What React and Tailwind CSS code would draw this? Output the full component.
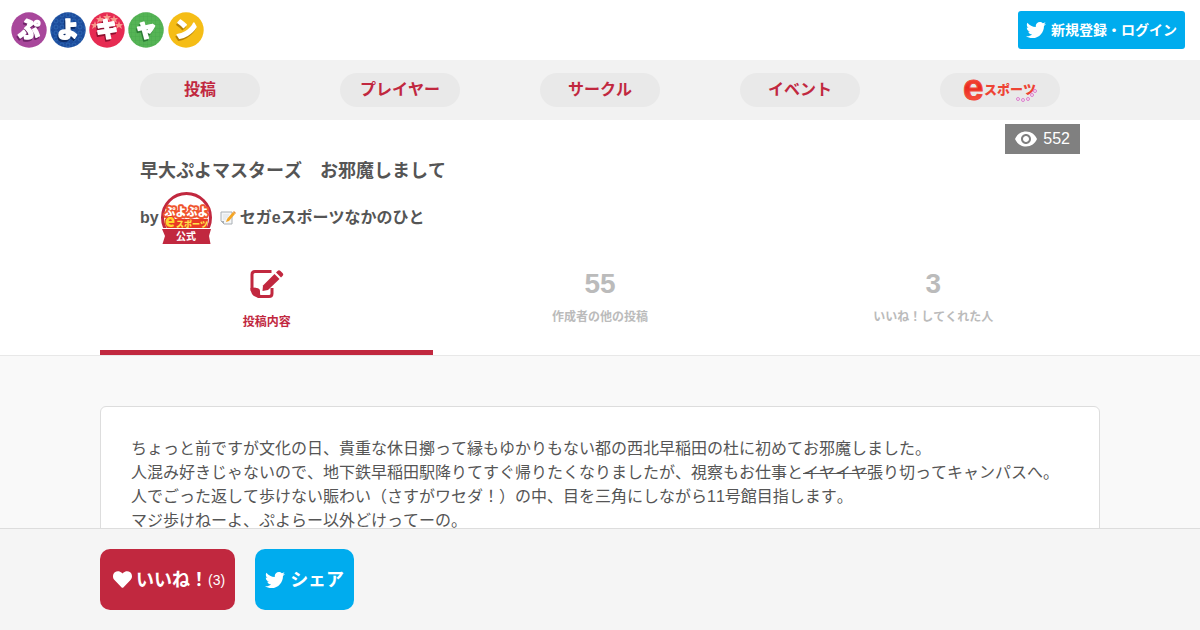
import React from "react";
import { FaTwitter, FaHeart } from "react-icons/fa";
import { MdVisibility } from "react-icons/md";

const navLinks = [
  { name: "投稿", path: "#posts" },
  { name: "プレイヤー", path: "#players" },
  { name: "サークル", path: "#circles" },
  { name: "イベント", path: "#events" },
];

const logoLetters = [
  { char: "ぷ", x: 18, shadow: "#6f2468" },
  { char: "よ", x: 57, shadow: "#0d2c66" },
  { char: "キ", x: 96, shadow: "#8f1030" },
  { char: "ャ", x: 135, shadow: "#2c7a35" },
  { char: "ン", x: 175, shadow: "#b58205" },
];

const Logo = () => (
  <svg viewBox="0 0 194 36" className="h-9 w-[194px] overflow-visible" role="img" aria-label="ぷよキャン">
    <defs>
      <pattern id="grid" width="4" height="4" patternUnits="userSpaceOnUse">
        <path d="M0 0H4M0 0V4" stroke="#3d9a44" strokeWidth="0.8" />
      </pattern>
      <pattern id="bubbles" width="6" height="6" patternUnits="userSpaceOnUse">
        <circle cx="3" cy="3" r="2" fill="none" stroke="#3a7cc4" strokeWidth="0.8" />
      </pattern>
    </defs>
    <circle cx="18" cy="18" r="17.700" fill="#a8479b" />
    <circle cx="57" cy="18" r="17.700" fill="#1c4c9c" />
    <circle cx="57" cy="18" r="17.700" fill="url(#bubbles)" opacity="0.6" />
    <circle cx="96" cy="18" r="17.700" fill="#e62b52" />
    <circle cx="135" cy="18" r="17.700" fill="#55b455" />
    <circle cx="135" cy="18" r="17.700" fill="url(#grid)" opacity="0.5" />
    <circle cx="175" cy="18" r="17.700" fill="#f5bd16" />
    <g fill="#f79a8c">
      <path id="star" d="M96 1l1 3h3l-2 2 1 3-3-2-3 2 1-3-2-2h3z" />
      <use href="#star" x="-7" y="2" />
      <use href="#star" x="7" y="2" />
      <use href="#star" x="-12" y="8" />
      <use href="#star" x="12" y="8" />
    </g>
    <g
      fill="#fff"
      fontSize="22"
      fontWeight="900"
      textAnchor="middle"
      strokeLinejoin="round"
      className="font-['Noto_Sans_CJK_JP',sans-serif]"
    >
      {logoLetters.map(({ char, x, shadow }) => (
        <text
          key={char}
          x={x}
          y={char === "ャ" ? 24 : 25}
          stroke="#fff"
          strokeWidth="1.5"
          style={{ filter: `drop-shadow(-1px 2px 0 ${shadow})` }}
        >
          {char}
        </text>
      ))}
    </g>
  </svg>
);

const EsportsLogo = () => (
  <svg viewBox="0 0 76 26" className="h-[26px] w-[76px] overflow-visible" role="img" aria-label="eスポーツ">
    <defs>
      <linearGradient id="flame" x1="0" y1="0" x2="0" y2="1">
        <stop offset="0" stopColor="#ff6d58" />
        <stop offset="0.5" stopColor="#ea2a20" />
        <stop offset="1" stopColor="#ff6a50" />
      </linearGradient>
    </defs>
    <text x="1" y="23" fill="url(#flame)" stroke="#f04a3a" strokeWidth="1" fontSize="37" fontWeight="700" className="font-['Liberation_Sans',sans-serif]">
      e
    </text>
    <text x="22" y="17" fill="#ee4434" fontSize="13" fontWeight="900" className="font-['Noto_Sans_CJK_JP',sans-serif]">
      スポーツ
    </text>
    <g fill="#f6e4f4" stroke="#d568c4" strokeWidth="0.8">
      <circle cx="56" cy="22" r="1.5" />
      <circle cx="61" cy="23" r="1.5" />
      <circle cx="66" cy="22" r="1.5" />
      <circle cx="70" cy="18" r="1.5" />
      <circle cx="73" cy="14" r="1.5" />
    </g>
  </svg>
);

const Avatar = () => (
  <svg viewBox="0 0 52 52" className="h-[52px] w-[52px] overflow-visible" role="img" aria-label="公式">
    <circle cx="25.500" cy="25.500" r="24" fill="#fff" stroke="#c1283f" strokeWidth="3" />
    <path d="M4 27H47L46 37H6z" fill="#e83a25" />
    <g fontWeight="900" textAnchor="middle" paintOrder="stroke" strokeLinejoin="round" className="font-['Noto_Sans_CJK_JP',sans-serif]">
      <text x="25.500" y="24" fontSize="11" fill="#fff" stroke="#f0542d" strokeWidth="4">
        ぷよぷよ
      </text>
      <text x="31" y="35" fontSize="8" fill="#ffe14a">
        スポーツ
      </text>
      <text x="9" y="35" fontSize="17" fill="#ffd22e" stroke="#e83a25" strokeWidth="2">
        e
      </text>
    </g>
    <path d="M1 37H50L48 44L49.500 52H1.500L4 44z" fill="#c1283f" />
    <path d="M1 36.500H50" stroke="#fff" />
    <text x="25" y="48" fontSize="10" fontWeight="700" fill="#fff" textAnchor="middle" className="font-['Noto_Sans_CJK_JP',sans-serif]">
      公式
    </text>
  </svg>
);

const MemoIcon = () => (
  <svg viewBox="0 0 16 16" className="h-4 w-4" aria-hidden="true">
    <path d="M1 2H12V14H4L1 11z" fill="#f4f6f8" stroke="#aab0b5" />
    <path d="M3 5H9M3 7H8M3 9H6" stroke="#dde1e4" />
    <path d="M1 11H4V14z" fill="#aab0b5" />
    <path d="M6 12L7 9L13 2L15 4L9 11z" fill="#f5a623" />
    <path d="M13 2L14 1L16 3L15 4z" fill="#e8943b" />
  </svg>
);

const EditIcon = () => (
  <svg viewBox="0 0 34 28" className="h-7 w-[34px]" aria-hidden="true">
    <path d="M21.500 1.500H5Q2 1.500 2 4.500V19Q9 18 9 26.500H19Q22 26.500 22 23.500V18" fill="none" stroke="currentColor" strokeWidth="3" />
    <path d="M.5 18Q10 17 10 21V28Q.5 27 .5 18z" fill="currentColor" />
    <path d="M12.500 21L13 15.500L24.500 4L29.500 9L18 20z" fill="currentColor" />
    <path d="M26 2.500L27.500 1Q29 -.5 30.500 1L32.500 3Q34 4.500 32.500 6L31 7.500z" fill="currentColor" />
  </svg>
);

const Navbar = () => (
  <header>
    <div className="flex h-15 items-center justify-between bg-white pl-[11px] pr-[15px]">
      <a href="#top">
        <Logo />
      </a>
      <button className="flex h-[38px] items-center gap-[5px] rounded-[3px] bg-[#00acee] px-2 text-sm font-bold text-white">
        <FaTwitter className="h-5 w-5" />
        新規登録・ログイン
      </button>
    </div>
    <nav className="bg-[#f2f2f2]">
      <ul className="mx-auto grid h-15 max-w-[1000px] grid-cols-5 items-center">
        {navLinks.map(({ name, path }) => (
          <li key={path} className="flex justify-center">
            <a href={path} className="flex h-[34px] w-30 items-center justify-center rounded-full bg-[#e9e9e9] font-bold text-[#c1283f]">
              {name}
            </a>
          </li>
        ))}
        <li className="flex justify-center">
          <a href="#esports" className="flex h-[34px] w-30 items-center justify-center rounded-full bg-[#e9e9e9]">
            <EsportsLogo />
          </a>
        </li>
      </ul>
    </nav>
  </header>
);

const PostHeader = () => (
  <section className="border-b border-[#e8e8e8] bg-white">
    <div className="relative mx-auto max-w-[1000px]">
      {/* View count */}
      <div className="absolute top-1 right-5 flex h-[30px] items-center gap-[5px] bg-[#808080] pr-[10px] pl-[9px] text-white">
        <MdVisibility className="h-6 w-6" />
        552
      </div>

      <div className="px-10 pt-9">
        <h1 className="text-lg leading-[30px] font-bold">早大ぷよマスターズ　お邪魔しまして</h1>
        <div className="mt-[6px] flex h-[52px] items-center gap-[2px] font-bold">
          <span>by</span>
          <Avatar />
          <a href="#author" className="flex items-center gap-1 pl-[5px]">
            <MemoIcon />
            セガeスポーツなかのひと
          </a>
        </div>
      </div>

      {/* Tabs */}
      <div className="mt-[11px] grid h-[100px] grid-cols-3 text-center text-xs font-bold text-[#bbb]">
        <button className="flex flex-col items-center border-b-[5px] border-[#c1283f] pt-[15px] text-[#c1283f]">
          <EditIcon />
          <span className="mt-4">投稿内容</span>
        </button>
        <button className="flex flex-col items-center pt-[9px]">
          <span className="text-[28px] leading-10">55</span>
          <span className="mt-[5px]">作成者の他の投稿</span>
        </button>
        <button className="flex flex-col items-center pt-[9px]">
          <span className="text-[28px] leading-10">3</span>
          <span className="mt-[5px]">いいね！してくれた人</span>
        </button>
      </div>
    </div>
  </section>
);

const App = () => {
  return (
    <div className="min-h-screen bg-[#f9f9f9] font-['Liberation_Sans','Noto_Sans_CJK_JP',sans-serif] text-base text-[#555] [font-kerning:none]">
      <Navbar />
      <main>
        <PostHeader />
        <article className="mx-auto mt-[50px] max-w-[1000px] rounded-md border border-[#ddd] bg-white px-[30px] pt-[30px] pb-20">
          <p>
            ちょっと前ですが文化の日、貴重な休日擲って縁もゆかりもない都の西北早稲田の杜に初めてお邪魔しました。
            <br />
            人混み好きじゃないので、地下鉄早稲田駅降りてすぐ帰りたくなりましたが、視察もお仕事と<s>イヤイヤ</s>張り切ってキャンパスへ。
            <br />
            人でごった返して歩けない賑わい（さすがワセダ！）の中、目を三角にしながら11号館目指します。
            <br />
            マジ歩けねーよ、ぷよらー以外どけってーの。
          </p>
        </article>
      </main>

      {/* Action bar */}
      <footer className="fixed inset-x-0 bottom-0 border-t border-[#ddd] bg-[#f5f5f5] py-5">
        <div className="mx-auto flex max-w-[1000px] gap-5 text-lg font-bold text-white">
          <button className="flex h-[61px] items-center rounded-[10px] bg-[#c1283f] pl-[13px] pr-[10px]">
            <FaHeart className="mr-1 h-[19px] w-[19px]" />
            いいね！
            <span className="text-sm font-normal">(3)</span>
          </button>
          <button className="flex h-[61px] items-center gap-[5px] rounded-[10px] bg-[#00acee] px-[10px]">
            <FaTwitter className="h-5 w-5" />
            シェア
          </button>
        </div>
      </footer>
    </div>
  );
};

export default App;
